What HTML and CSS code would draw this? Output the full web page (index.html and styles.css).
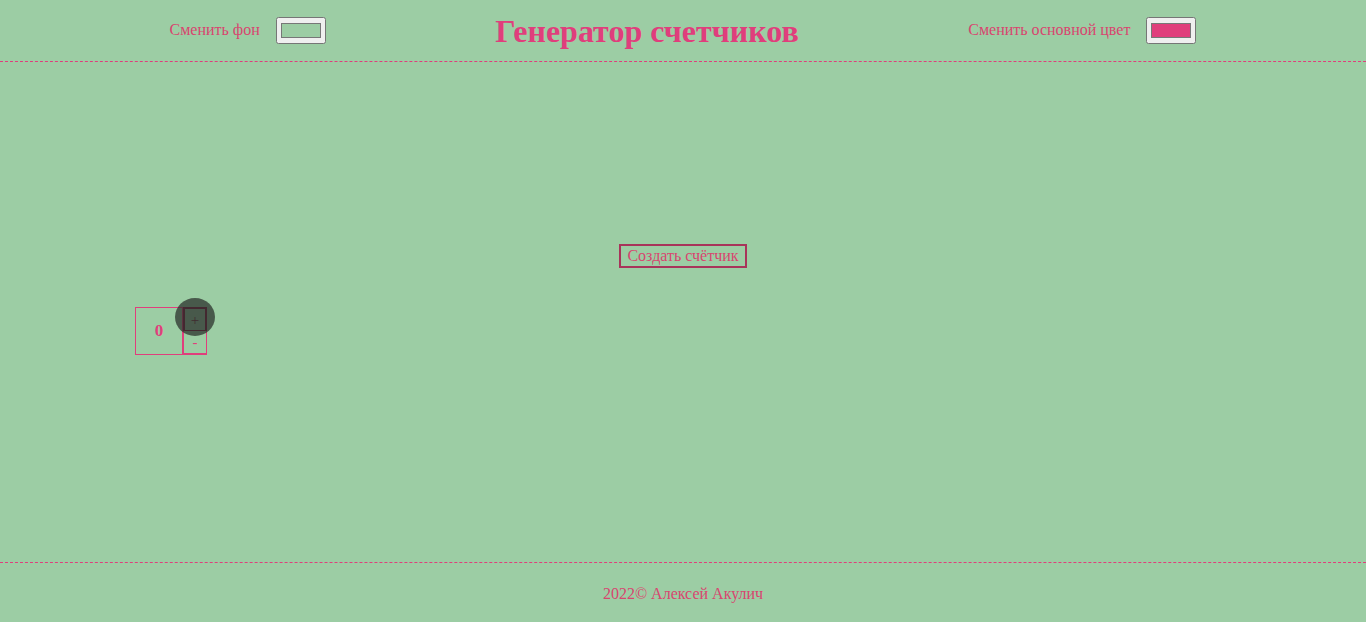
FILE: index.html
```html
<!DOCTYPE html>
<html lang="ru">
<head>
<meta charset="utf-8">
<title>Генератор счетчиков</title>
<link rel="stylesheet" href="styles.css">
</head>
<body>
<header class="header">
  <div class="control">
    <span class="control-label">Сменить фон</span>
    <input class="color-input" type="color" value="#9ccda4">
  </div>
  <h1 class="title">Генератор счетчиков</h1>
  <div class="control">
    <span class="control-label">Сменить основной цвет</span>
    <input class="color-input" type="color" value="#e03e7c">
  </div>
</header>
<main class="main">
  <div class="create-row">
    <button class="create-btn">Создать счётчик</button>
  </div>
  <div class="counters">
    <div class="counter">
      <div class="counter-value">0</div>
      <div class="counter-buttons">
        <button class="counter-btn counter-btn-plus">+</button>
        <button class="counter-btn counter-btn-minus">-</button>
        <span class="ripple"></span>
      </div>
    </div>
  </div>
</main>
<footer class="footer">2022© Алексей Акулич</footer>
</body>
</html>
```

FILE: styles.css
```css
html, body {
  margin: 0;
  padding: 0;
}
body {
  background: #9ccda4;
  color: #e03e7c;
  font-family: "Liberation Serif", "Times New Roman", serif;
  font-size: 16px;
  height: 622px;
  display: flex;
  flex-direction: column;
  overflow: hidden;
}
.header {
  height: 61px;
  border-bottom: 1px dashed #e03e7c;
  display: flex;
  align-items: center;
  justify-content: space-evenly;
  flex-shrink: 0;
}
.control {
  display: flex;
  align-items: center;
  gap: 16px;
}
.control-label {
  color: #d9456f;
  font-size: 16px;
  position: relative;
  top: -1px;
}
.color-input {
  width: 50px;
  height: 27px;
  margin: 0;
  padding: 1px 2px;
  cursor: pointer;
}
.title {
  margin: 0;
  font-size: 32px;
  font-weight: bold;
  color: #e03e7c;
  position: relative;
  top: 1px;
}
.main {
  flex: 1;
  display: flex;
  flex-direction: column;
  padding-top: 182px;
}
.create-row {
  display: flex;
  justify-content: center;
}
.create-btn {
  font-family: "Liberation Serif", "Times New Roman", serif;
  font-size: 16px;
  color: #d9456f;
  background: transparent;
  border: 2px solid #a8345a;
  padding: 0 6px 2px;
  height: 24px;
  line-height: 17px;
}
.counters {
  display: flex;
  padding-left: 135px;
  margin-top: 39px;
}
.counter {
  display: flex;
}
.counter-value {
  width: 46px;
  height: 46px;
  border: 1px solid #e03e7c;
  display: flex;
  align-items: center;
  justify-content: center;
  font-weight: bold;
  font-size: 17px;
  color: #e03e7c;
}
.counter-buttons {
  position: relative;
  display: flex;
  flex-direction: column;
  width: 24px;
}
.counter-btn {
  font-family: "Liberation Serif", "Times New Roman", serif;
  font-size: 15px;
  color: #e03e7c;
  background: transparent;
  border: 1px solid #e03e7c;
  width: 24px;
  height: 24px;
  padding: 0;
  line-height: 18px;
}
.counter-btn-plus {
  border: 2px solid #8a1f44;
  border-bottom-width: 1px;
  color: #7a2a44;
}
.counter-btn-minus {
  border-top: none;
  border-bottom-width: 2px;
}
.ripple {
  position: absolute;
  left: -8px;
  top: -9px;
  width: 40px;
  height: 38px;
  border-radius: 50%;
  background: rgba(40, 45, 40, 0.72);
  pointer-events: none;
}
.footer {
  height: 57px;
  border-top: 1px dashed #e03e7c;
  display: flex;
  align-items: center;
  justify-content: center;
  color: #d9456f;
  font-size: 16px;
  flex-shrink: 0;
  padding-top: 2px;
}
```
